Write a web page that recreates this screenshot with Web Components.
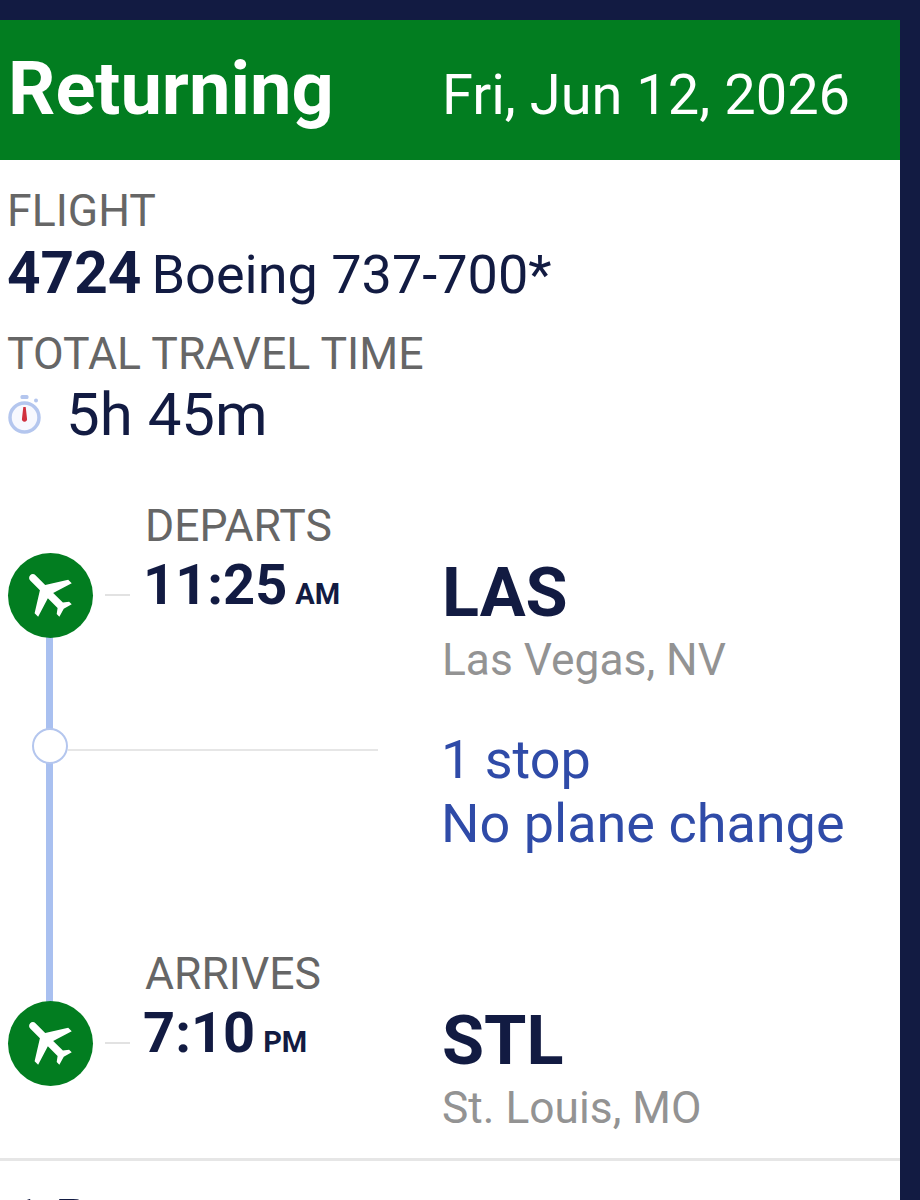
<!DOCTYPE html>
<html>
<head>
<meta charset="utf-8">
<title>Returning flight</title>
<style>
  html, body { margin: 0; padding: 0; background: #121b42; height: 1200px; overflow: hidden; }
  body { font-family: Roboto, "Liberation Sans", sans-serif; color: #121b42; }
</style>
</head>
<body>
<flight-card>
  <flight-header slot="header" label="Returning" date="Fri, Jun 12, 2026"></flight-header>
  <flight-summary number="4724" plane="Boeing 737-700*" duration="5h 45m"></flight-summary>
  <flight-timeline>
    <flight-stop kind="DEPARTS" time="11:25" ampm="AM" code="LAS" city="Las Vegas, NV"></flight-stop>
    <flight-layover first="1 stop" second="No plane change"></flight-layover>
    <flight-stop kind="ARRIVES" time="7:10" ampm="PM" code="STL" city="St. Louis, MO"></flight-stop>
  </flight-timeline>
  <flight-footer text="1 Passenger"></flight-footer>
</flight-card>
<script>
class FlightCard extends HTMLElement {
  constructor() {
    super();
    const template = document.createElement('template');
    template.innerHTML = `
      <style>
        :host {
          display: block;
          width: 900px;
          margin-top: 20px;
          height: 1180px;
          background: #fff;
          overflow: hidden;
        }
      </style>
      <slot name="header"></slot>
      <slot></slot>`;
    this.attachShadow({ mode: 'open' });
    this.shadowRoot.appendChild(template.content.cloneNode(true));
  }
}

class FlightHeader extends HTMLElement {
  constructor() {
    super();
    this.attachShadow({ mode: 'open' });
    this.shadowRoot.innerHTML = `
      <style>
        :host {
          display: grid;
          grid-template-columns: 442px 1fr;
          align-items: center;
          height: 140px;
          background: #027d20;
          color: #fff;
        }
        #label { font-size: 74px; font-weight: 700; padding-left: 8px; line-height: 1; margin-top: -3px; }
        #date { font-size: 56px; line-height: 1; margin-top: 10px; }
      </style>
      <div id="label">${this.getAttribute('label')}</div>
      <div id="date">${this.getAttribute('date')}</div>`;
  }
}

class FlightSummary extends HTMLElement {
  constructor() {
    super();
    this.attachShadow({ mode: 'open' });
    this.shadowRoot.innerHTML = `
      <style>
        :host { display: block; padding: 25px 0 0 7px; }
        .label { font-size: 44.600px; line-height: 52px; color: #666; }
        .value { font-size: 54px; line-height: 62px; display: flex; align-items: baseline; margin-top: 5px; }
        b { font-size: 58.600px; font-weight: 700; margin-right: 10px; }
        #time { margin-top: 22px; }
        #duration { display: flex; align-items: center; gap: 24px; font-size: 60px; margin-top: 4px; }
        svg { width: 35px; height: 42px; flex: none; }
      </style>
      <div class="label">FLIGHT</div>
      <div class="value"><b>${this.getAttribute('number')}</b><span>${this.getAttribute('plane')}</span></div>
      <div class="label" id="time">TOTAL TRAVEL TIME</div>
      <div class="value" id="duration">
        <svg viewBox="0 0 35 42" aria-hidden="true">
          <circle cx="17.5" cy="23.5" r="14.5" fill="#f7f8fe" stroke="#b4c6ee" stroke-width="3.5"/>
          <rect x="13.5" y="1" width="8" height="4" rx="1.5" fill="#b4c6ee"/>
          <circle cx="29" cy="6.500" r="2" fill="#b4c6ee"/>
          <path d="M16.300 13h2.400l1.300 11.500a2.600 2.600 0 1 1-5 0z" fill="#d0303e"/>
        </svg>
        <span>${this.getAttribute('duration')}</span>
      </div>`;
  }
}

class FlightTimeline extends HTMLElement {
  constructor() {
    super();
    const template = document.createElement('template');
    template.innerHTML = `
      <style>
        :host { display: block; position: relative; margin-top: 54px; }
        #rail {
          position: absolute;
          left: 46px;
          top: 130px;
          height: 380px;
          width: 7px;
          background: #a9c0f0;
        }
        ::slotted(*) { position: relative; }
      </style>
      <div id="rail"></div>
      <slot></slot>`;
    this.attachShadow({ mode: 'open' });
    this.shadowRoot.appendChild(template.content.cloneNode(true));
  }
}

class FlightStop extends HTMLElement {
  constructor() {
    super();
    this.attachShadow({ mode: 'open' });
    this.shadowRoot.innerHTML = `
      <style>
        :host {
          display: grid;
          grid-template-columns: 105px 337px 1fr;
          grid-template-rows: 52px auto;
        }
        #badge {
          grid-column: 1 / 3;
          grid-row: 2 / 4;
          display: flex;
          align-items: flex-start;
          padding-left: 8px;
        }
        #badge .dot {
          width: 85px;
          height: 85px;
          flex: none;
          border-radius: 50%;
          background: #027d20;
          display: flex;
          align-items: center;
          justify-content: center;
          margin-top: 1px;
        }
        #badge svg { width: 60px; height: 60px; }
        #tick { width: 25px; height: 2px; background: #e2e2e2; margin: 42px 0 0 12px; flex: none; }
        #kind { grid-column: 2; grid-row: 1; font-size: 44.500px; line-height: 52px; color: #666; margin-left: 40px; }
        #time { grid-column: 2; grid-row: 2; margin: 2px 0 0 38px; line-height: 62px; font-size: 56px; font-weight: 700; position: relative; }
        #time small { font-size: 29px; font-weight: 700; margin-left: 8px; }
        #place { grid-column: 3; grid-row: 1 / 4; padding-top: 53px; }
        #code { font-size: 68.400px; font-weight: 700; line-height: 80px; }
        #city { font-size: 44.300px; line-height: 54px; color: #939393; }
      </style>
      <div id="kind">${this.getAttribute('kind')}</div>
      <div id="badge">
        <div class="dot">
          <svg viewBox="0.9 1.6 24 24" aria-hidden="true"><path fill="#fff" transform="rotate(-45 12 12)" d="M21 16v-2l-8-5V3.500c0-.83-.67-1.500-1.500-1.500S10 2.670 10 3.500V9l-8 5v2l8-2.500V19l-2 1.500V22l3.500-1 3.500 1v-1.500L13 19v-5.500l8 2.500z"/></svg>
        </div>
        <div id="tick"></div>
      </div>
      <div id="time">${this.getAttribute('time')}<small>${this.getAttribute('ampm')}</small></div>
      <div id="place">
        <div id="code">${this.getAttribute('code')}</div>
        <div id="city">${this.getAttribute('city')}</div>
      </div>`;
  }
}

class FlightLayover extends HTMLElement {
  constructor() {
    super();
    this.attachShadow({ mode: 'open' });
    this.shadowRoot.innerHTML = `
      <style>
        :host {
          display: grid;
          grid-template-columns: 442px 1fr;
          height: 261px;
          padding-top: 27px;
          box-sizing: border-box;
        }
        #marker { display: flex; align-items: center; height: 64px; padding-left: 32px; }
        #ring {
          width: 36px;
          height: 36px;
          box-sizing: border-box;
          border: 2px solid #b4c6ee;
          border-radius: 50%;
          background: #fff;
          flex: none;
        }
        #line { width: 310px; height: 2px; background: #e6e6e6; margin-top: 8px; }
        #text { font-size: 54px; line-height: 64px; color: #2f4ba8; margin-top: 14px; margin-left: -1px; }
      </style>
      <div id="marker"><div id="ring"></div><div id="line"></div></div>
      <div id="text">${this.getAttribute('first')}<br>${this.getAttribute('second')}</div>`;
  }
}

class FlightFooter extends HTMLElement {
  constructor() {
    super();
    this.attachShadow({ mode: 'open' });
    this.shadowRoot.innerHTML = `
      <style>
        :host {
          display: block;
          margin-top: 23px;
          border-top: 3px solid #e6e6e6;
          padding: 28px 0 0 11px;
          font-size: 54px;
          line-height: 60px;
        }
      </style>
      ${this.getAttribute('text')}`;
  }
}

customElements.define('flight-card', FlightCard);
customElements.define('flight-header', FlightHeader);
customElements.define('flight-summary', FlightSummary);
customElements.define('flight-timeline', FlightTimeline);
customElements.define('flight-stop', FlightStop);
customElements.define('flight-layover', FlightLayover);
customElements.define('flight-footer', FlightFooter);
</script>
</body>
</html>
